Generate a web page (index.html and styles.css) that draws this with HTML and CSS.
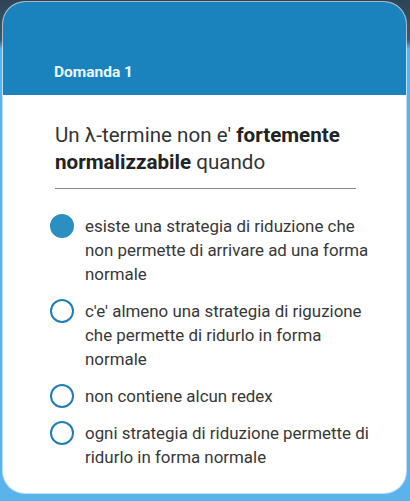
FILE: index.html
```html
<!DOCTYPE html>
<html lang="it">
<head>
<meta charset="utf-8">
<link rel="stylesheet" href="styles.css">
</head>
<body>
<div class="card">
  <div class="card-header">
    <div class="title">Domanda 1</div>
  </div>
  <div class="card-body">
    <p class="question">Un λ-termine non e' <b>fortemente normalizzabile</b> quando</p>
    <hr class="divider">
    <ul class="options">
      <li class="option selected"><span class="radio"></span><span class="label">esiste una strategia di riduzione che non permette di arrivare ad una forma normale</span></li>
      <li class="option"><span class="radio"></span><span class="label">c'e' almeno una strategia di riguzione che permette di ridurlo in forma normale</span></li>
      <li class="option"><span class="radio"></span><span class="label">non contiene alcun redex</span></li>
      <li class="option"><span class="radio"></span><span class="label">ogni strategia di riduzione permette di ridurlo in forma normale</span></li>
    </ul>
  </div>
</div>
</body>
</html>
```

FILE: styles.css
```css
html, body {
  margin: 0;
  padding: 0;
}
body {
  width: 410px;
  height: 501px;
  overflow: hidden;
  background: linear-gradient(to bottom, #2c4457 0px, #3a5a70 40px, #5ab3ea 49px, #5ab3ea 100%);
  font-family: Roboto, "Noto Sans", sans-serif;
  padding: 2px 4px 0 3px;
  box-sizing: border-box;
}
.card {
  width: 403px;
  height: 491px;
  background: #ffffff;
  border-radius: 22px;
  overflow: hidden;
  display: flex;
  flex-direction: column;
  box-shadow: 0 0 0 1px rgba(255,255,255,0.6);
}
.card-header {
  background: #1a83be;
  height: 93px;
  box-sizing: border-box;
  display: flex;
  align-items: flex-end;
  padding: 0 0 13px 51px;
}
.title {
  color: #eaf6fc;
  font-weight: 700;
  font-size: 15.5px;
  line-height: 19px;
}
.card-body {
  padding: 27px 27px 0 52px;
}
.question {
  margin: 0;
  font-size: 20.6px;
  line-height: 27px;
  color: #333;
  width: 310px;
}
.question b {
  font-weight: 700;
  color: #222;
}
.divider {
  margin: 12px 0 0 0;
  border: none;
  border-top: 1.5px solid #8a8a8a;
  width: 301px;
}
.options {
  list-style: none;
  margin: 25px 0 0 0;
  padding: 0;
  display: flex;
  flex-direction: column;
  gap: 13px;
}
.option {
  display: flex;
  align-items: flex-start;
  gap: 11px;
  margin-left: -5px;
}
.radio {
  flex: none;
  width: 24px;
  height: 24px;
  box-sizing: border-box;
  border: 2.5px solid #1f7fb3;
  border-radius: 50%;
}
.option.selected .radio {
  background: #2a8fc1;
  border-color: #2a8fc1;
}
.label {
  flex: 1;
  font-size: 16.9px;
  line-height: 24px;
  color: #383838;
}
```
